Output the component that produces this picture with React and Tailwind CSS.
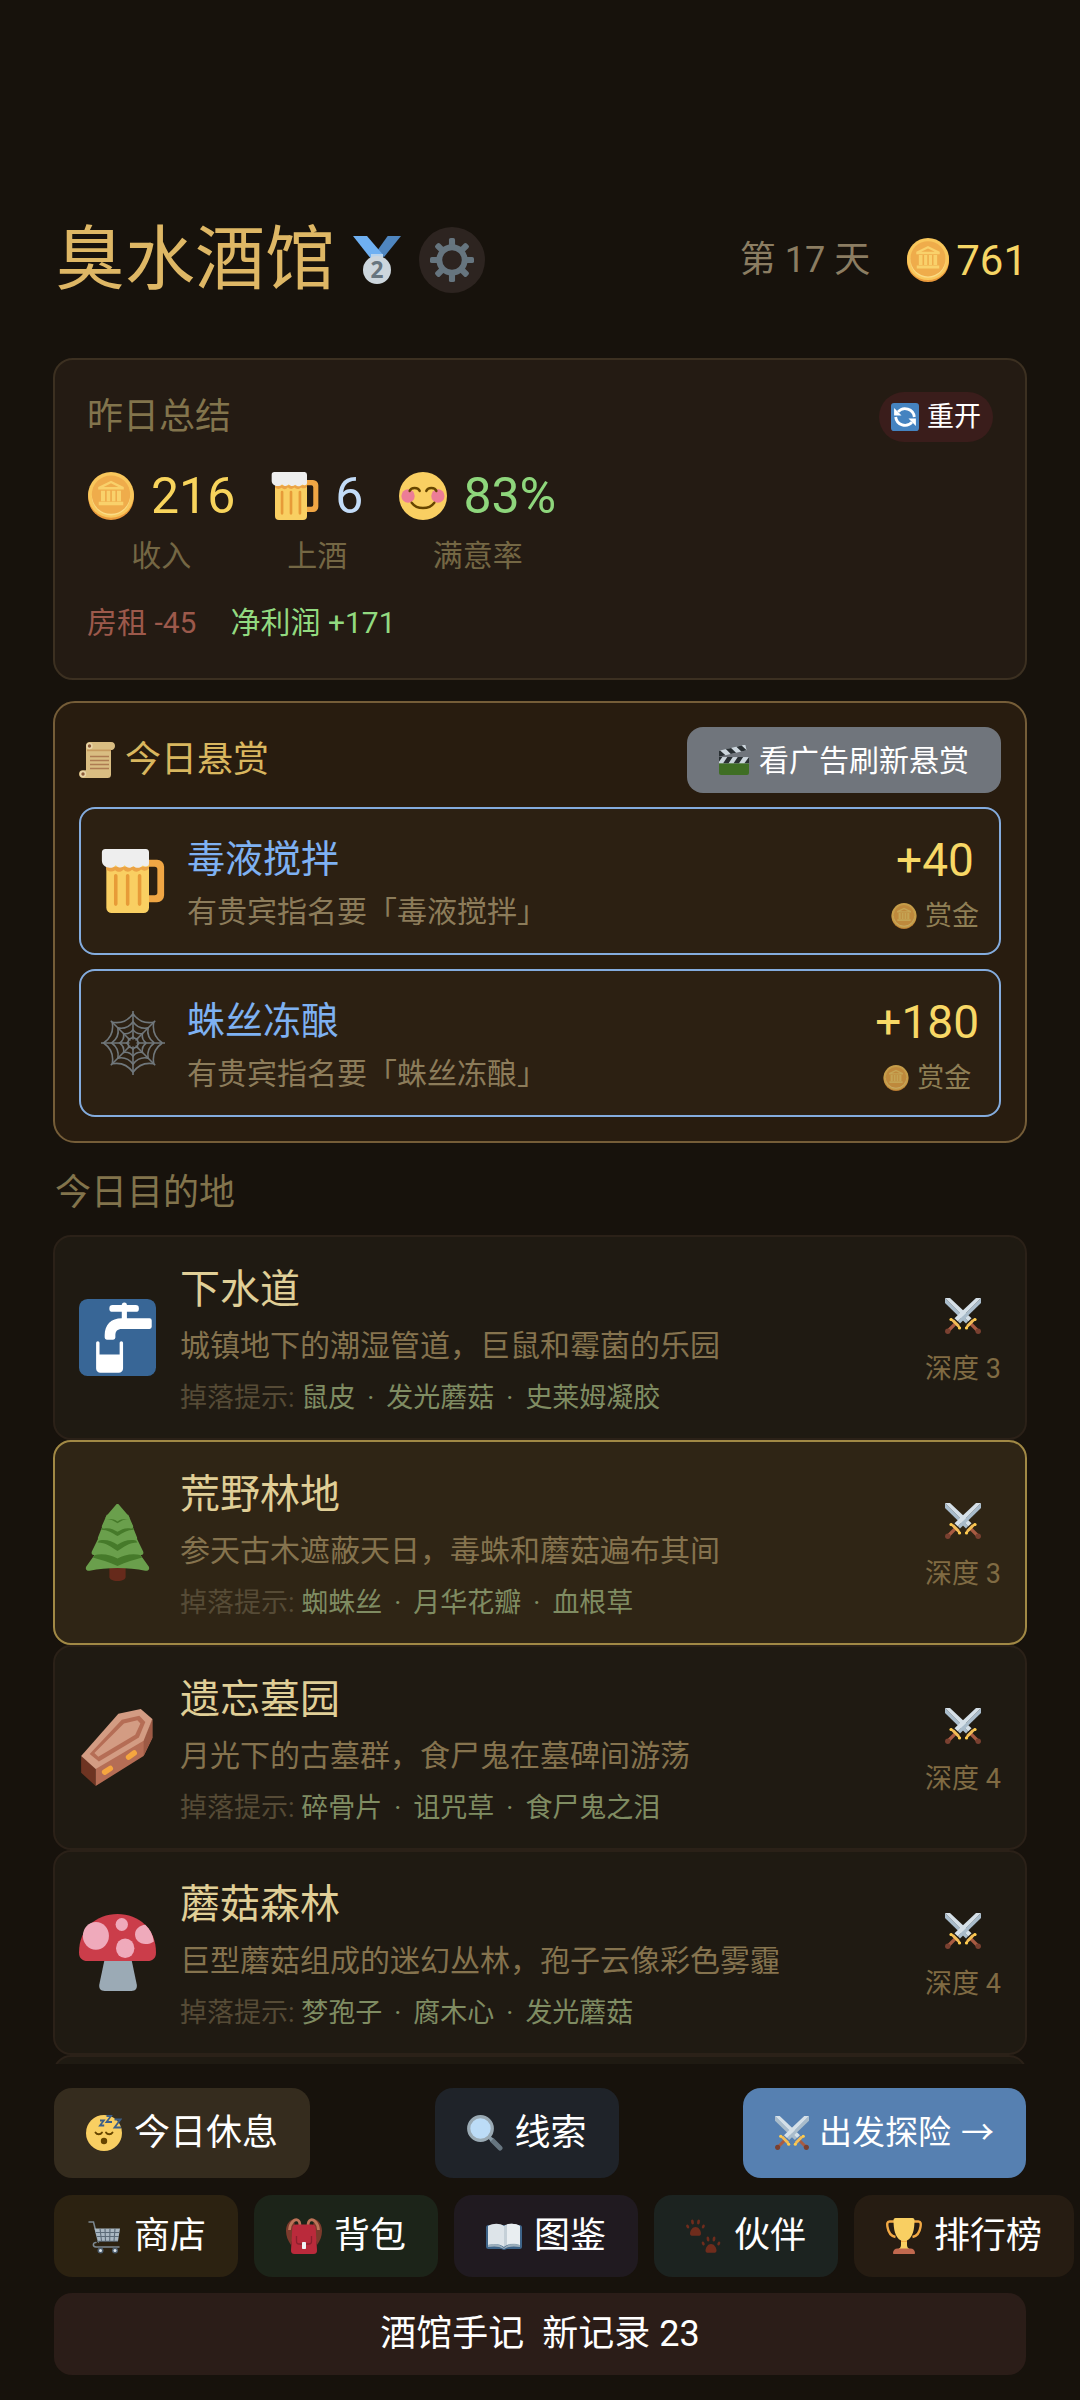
import { useState } from 'react';

const FONT = 'font-[Roboto,"Noto_Sans_CJK_SC",sans-serif]';

// 所有图标共用 36x36 画布
const Svg = ({ className, children }) => (
  <svg viewBox="0 0 36 36" className={`shrink-0 ${className}`} fill="none" aria-hidden="true">
    {children}
  </svg>
);

const Coin = ({ className }) => (
  <Svg className={className}>
    <circle cx="18" cy="18.8" r="17.2" fill="#ea9a3c" />
    <circle cx="18" cy="17.2" r="17.2" fill="#f9c75c" />
    <circle cx="18" cy="18.2" r="14.4" fill="#fbdc85" />
    <circle cx="18" cy="17" r="14.4" fill="#efac4b" />
    <path fill="#f9d16b" d="M18 6.6l9.6 4.6v2H8.4v-2zM10.5 14h3v8h-3zM14.8 14h2.6v8h-2.6zM18.7 14h2.6v8h-2.6zM22.5 14h3v8h-3zM8.8 22.4h18.4V25H8.8z" />
    <path fill="#efac4b" d="M18 8.5l5.5 2.8h-11z" />
  </Svg>
);

const Beer = ({ className }) => (
  <Svg className={className}>
    <path fill="#f0a644" fillRule="evenodd" d="M25 6h6.5a4 4 0 0 1 4 4v16a4 4 0 0 1-4 4H25zM27 10v16h3.2a1.5 1.5 0 0 0 1.5-1.5v-13A1.5 1.5 0 0 0 30.2 10z" />
    <path fill="#f9cf62" d="M3 7h24v26a3 3 0 0 1-3 3H6a3 3 0 0 1-3-3z" />
    <path fill="#eba345" d="M3 10h24v1c-1.5 1.5-3 1.6-4.5.6-1.6 1.5-3.5 1.5-5 .1-1.7 1.5-3.4 1.3-4.8-.2-1.5 1.8-3.3 1.7-4.7.4C6.300 13 4.5 13 3 11.5z" />
    <path stroke="#e79b38" strokeWidth="2" strokeLinecap="round" d="M8.3 15v16M15 15v16M21.7 15v16" />
    <path fill="#eeeeee" d="M2.5 0h22.7A2 2 0 0 1 27 2v6c0 1.7-1.8 2.5-3.5 1.3-1.7 1.7-3.8 1.7-5.3.2-1.7 1.5-3.5 1.3-4.9-.3-1.5 1.7-3.5 1.6-5-.1C6.5 11.5.8 11 .5 6.8V2a2 2 0 0 1 2-2z" />
  </Svg>
);

const Smile = ({ className }) => (
  <Svg className={className}>
    <circle cx="18" cy="18" r="18" fill="#f9cf62" />
    <circle cx="6.8" cy="18" r="5" fill="#ec7d97" />
    <circle cx="29.2" cy="18" r="5" fill="#ec7d97" />
    <path stroke="#664500" strokeWidth="1.9" strokeLinecap="round" d="M8 14.2c1-3 6.5-3 7.5 0M20.5 14.2c1-3 6.5-3 7.5 0" />
    <path stroke="#664500" strokeWidth="1.8" strokeLinecap="round" d="M9.5 23c4 5.4 13 5.4 17 0" />
  </Svg>
);

const Medal = ({ className }) => (
  <Svg className={className}>
    <path fill="#4f86c0" d="M26 0h10L23.5 15.5H15z" />
    <path fill="#6fb0f2" d="M0 0h10.5L22 13.5l-3 3h-6z" />
    <path fill="#b8d3ec" d="M13.5 13.5h9V17h-9z" />
    <circle cx="18" cy="25.5" r="10.5" fill="#cdd6dd" />
    <text x="18" y="31.5" textAnchor="middle" fontSize="17" fontWeight="700" fontFamily="Noto Sans" fill="#67757f">2</text>
  </Svg>
);

const Gear = ({ className }) => (
  <Svg className={className}>
    {[0, 45, 90, 135].map((deg) => (
      <g key={deg} transform={`rotate(${deg} 18 18)`} fill="#66757f">
        <rect x="15.5" y="0" width="5" height="9" rx="1.5" />
        <rect x="15.5" y="27" width="5" height="9" rx="1.5" />
      </g>
    ))}
    <circle cx="18" cy="18" r="10.4" stroke="#66757f" strokeWidth="4.8" />
  </Svg>
);

const Reload = ({ className }) => (
  <Svg className={className}>
    <rect width="36" height="36" rx="4" fill="#4583c0" />
    <path stroke="#fff" strokeWidth="3.6" d="M9 11.5A12 12 0 0 1 30 18M27 24.5A12 12 0 0 1 6 18" />
    <path fill="#fff" d="M4 6.5V16h9.5zM32 29.5V20h-9.5z" />
  </Svg>
);

const Scroll = ({ className }) => (
  <Svg className={className}>
    <path fill="#d9bd82" d="M10 0h22c3 0 4 2 4 4s-1.5 4-3.5 4H32v24.5a3.5 3.5 0 0 1-3.5 3.5H4c-2.5 0-4-2-4-4s1.5-3.7 3.5-3.7H7V4a4 4 0 0 1 3-4z" />
    <path fill="#c69a5f" d="M8 7.5h24v1.7H8z" />
    <circle cx="10.5" cy="4" r="3.2" fill="#e9d6a8" />
    <circle cx="10.5" cy="4" r="1.7" fill="#8a5a3a" />
    <circle cx="4" cy="32" r="3.2" fill="#e9d6a8" />
    <circle cx="4" cy="32" r="1.7" fill="#8a5a3a" />
    <path stroke="#ae7b52" strokeWidth="1.4" d="M11 14.5h19M11 18.5h19M11 22.5h19M11 26.5h19" />
  </Svg>
);

const Clapper = ({ className }) => (
  <Svg className={className}>
    <path fill="#3f6e24" d="M0 21h36v12.5a2.5 2.5 0 0 1-2.5 2.5h-31A2.5 2.5 0 0 1 0 33.5z" />
    <path fill="#ccd6dd" d="M0 14.5h36V22H0z" />
    <path fill="#292f33" d="M0 14.5h4L0 20zM10 14.5h6.5L11.5 22H5zM22.5 14.5H29L24 22h-6.5zM36 14.5V22h-5.5z" />
    <g transform="rotate(-13 0 14)">
      <path fill="#ccd6dd" d="M0 7h34v7H0z" />
      <path fill="#292f33" d="M0 7h3l5 7H0zM10 7h6.5l4.5 7h-6.5zM23 7h6.5l4.5 7h-6.5z" />
    </g>
  </Svg>
);

// 蛛网：八根辐条加四圈内凹的弧线
const webRing = (r) => {
  const pt = (i, rad) => {
    const a = (i * Math.PI) / 4;
    return `${(18 + rad * Math.cos(a)).toFixed(2)} ${(18 + rad * Math.sin(a)).toFixed(2)}`;
  };
  let d = `M${pt(0, r)}`;
  for (let i = 0; i < 8; i++) d += `Q${pt(i + 0.5, r * 0.68)} ${pt(i + 1, r)}`;
  return d;
};

const Web = ({ className }) => (
  <Svg className={className}>
    <g stroke="#70777b" strokeWidth="0.9">
      <path d="M18 0v36M0 18h36M5.5 5.5l25 25M30.5 5.5l-25 25" />
      {[3.5, 7.5, 12, 16.5].map((r) => (
        <path key={r} d={webRing(r)} />
      ))}
    </g>
    <circle cx="18" cy="18" r="2" fill="#2c2012" />
  </Svg>
);

const Tap = ({ className }) => (
  <Svg className={className}>
    <rect width="36" height="36" rx="4" fill="#386696" />
    <rect x="14.2" y="2.8" width="13.8" height="3.2" rx="1.5" fill="#fff" />
    <path fill="#fff" d="M20 2.8a1.2 1.2 0 0 1 2.4 0V10H20z" />
    <path fill="#fff" d="M33 9a1 1 0 0 1 1 1v3a1 1 0 0 1-1 1H20c-2 0-3 1-3 3v1a1 1 0 0 1-1 1h-3a1 1 0 0 1-1-1v-1c0-5 3-8 8-8z" />
    <path fill="#fff" d="M8 20.5a.8.8 0 0 1 1.6 0V26H19v-5.5a.8.8 0 0 1 1.6 0V32.5a2 2 0 0 1-2 2H10a2 2 0 0 1-2-2z" />
  </Svg>
);

const Tree = ({ className }) => (
  <Svg className={className}>
    <path fill="#662a1b" d="M14.2 29h7.6v5c0 1.2-1.4 2-3.8 2s-3.8-.8-3.8-2z" />
    <path fill="#6a9f4c" d="M10 20h16l6.6 9.2c.6 1.2-.2 2.3-1.6 2-8-1.7-18-1.7-26 0-1.4.3-2.2-.8-1.6-2z" />
    <path fill="#467a2a" d="M9 22h18l2.5 3C26 26 22 27 18 29c-4-2-8-3-11.5-4z" />
    <path fill="#6a9f4c" d="M10 14h16l4 8.2c.4 1-.2 1.8-1.2 1.6C24 23 21 24 18 25.5c-3-1.5-6-2.5-10.8-1.7-1 .2-1.6-.6-1.2-1.6z" />
    <path fill="#467a2a" d="M10.5 15.5h15l1.8 2.5c-3.8 0-6.3 2-9.3 4-3-2-5.5-4-9.3-4z" />
    <path fill="#6a9f4c" d="M11.5 9h13l2.6 6.6c.3.9-.2 1.5-1 1.4C23 16.5 20.5 17.5 18 19c-2.5-1.5-5-2.5-8.1-2-.8.1-1.3-.5-1-1.4z" />
    <path fill="#467a2a" d="M11.5 10h13l1.2 2c-3.2 0-5.2 1.5-7.7 3-2.5-1.5-4.5-3-7.7-3z" />
    <path fill="#6a9f4c" d="M13 5h10l2.2 5c.4.9-.1 1.5-.9 1.4-2.8-.4-4.3.3-6.3 1.6-2-1.3-3.5-2-6.3-1.6-.8.1-1.3-.5-.9-1.4z" />
    <path fill="#467a2a" d="M13.5 5.5h9l1 1.5c-2.2 0-3.5.7-5.5 2-2-1.3-3.3-2-5.5-2z" />
    <path fill="#6a9f4c" d="M17.2.5c.4-.7 1.2-.7 1.6 0l4.5 5.2c.6.9 0 1.5-.8 1.4-1.8-.2-3 .1-4.5 1.1-1.5-1-2.7-1.3-4.5-1.1-.8.1-1.4-.5-.8-1.4z" />
  </Svg>
);

const Coffin = ({ className }) => (
  <Svg className={className}>
    <path fill="#6e3422" d="M1 22l6.8 5.8V36L1 29.8z" />
    <path fill="#b56d55" d="M34.3 4.7v8.8L30.2 22 7.8 36v-9L31 12.5z" />
    <path fill="#9d5a45" d="M34.3 4.7v8.8L30.2 22v-8z" />
    <path fill="#d39c83" d="M18.4 2.2L28.9 0l5.4 4.7-4.1 10.2L7.8 28 1 22z" />
    <path fill="#b56d55" d="M20 5l8.2-1.9 2.8 3-3 7.2L9.3 24.5 5 21z" />
    <path fill="#d39c83" d="M21 6.8l6.3-1.5 1.4 1.5-2.4 5.2L9 22.3 7.2 20.6z" />
    <path stroke="#f5a63f" strokeWidth="2.6" strokeLinecap="round" d="M12 29.5l2.6-1.7M23.2 22.5l2.6-1.9" />
  </Svg>
);

const Mushroom = ({ className }) => (
  <Svg className={className}>
    <path fill="#9baab5" d="M12 21h12.5l2.5 12c.3 1.8-.6 3-2.5 3h-12.5c-1.9 0-2.8-1.2-2.5-3z" />
    <path fill="#cb3d4a" d="M0 18C0 7 8 0 18 0s18 7 18 18c0 2.6-1.5 4-4 4H4c-2.5 0-4-1.4-4-4z" />
    <ellipse cx="7.9" cy="10.2" rx="6.1" ry="6.5" fill="#efaabb" />
    <ellipse cx="20" cy="4.9" rx="2.9" ry="3" fill="#efaabb" />
    <ellipse cx="21.6" cy="16" rx="4.3" ry="4.6" fill="#efaabb" />
    <path fill="#efaabb" d="M31 5c-2.5.3-4.8 1.8-4.8 4.5s2 4.5 4.8 4.5c1.6 0 3-.4 4-1.2C34.5 9.5 33.2 7 31 5z" />
  </Svg>
);

const Blade = () => (
  <>
    <path fill="#a9bccb" d="M36 0v5L15 25.5 12.7 23z" />
    <path fill="#d5e0e8" d="M36 0h-5L9.5 20.3l3.2 2.9z" />
    <path stroke="#a85b42" strokeWidth="3.2" d="M10 26l-6 6" />
    <circle cx="2.8" cy="33.2" r="2.7" fill="#7a4030" />
    <path stroke="#f3bd57" strokeWidth="2.4" strokeLinecap="round" d="M6.5 21.5l8 8" />
    <path fill="#f3bd57" d="M8.5 21l6.5 6.5-3 .5-4-4z" />
    <circle cx="6" cy="21.5" r="1.6" fill="#ffcc4d" />
    <circle cx="14.5" cy="30" r="1.6" fill="#ffcc4d" />
  </>
);

const Swords = ({ className }) => (
  <Svg className={className}>
    <g transform="matrix(-1 0 0 1 36 0)">
      <Blade />
    </g>
    <Blade />
  </Svg>
);

const Sleepy = ({ className }) => (
  <Svg className={className}>
    <circle cx="18" cy="18" r="18" fill="#f9cf62" />
    <path stroke="#664500" strokeWidth="1.9" strokeLinecap="round" d="M9.5 17.5c1.5 2.4 5 2.4 6.5 0M20 17.5c1.5 2.4 5 2.4 6.5 0" />
    <circle cx="18" cy="26" r="3.2" fill="#664500" />
    <path stroke="#3d5f88" strokeWidth="1.8" d="M14 5.5h3.8L14 10.5h4.2M20.5 1h4.5l-4.5 6H26M28.5 4.5h6l-6 8h6.5" />
  </Svg>
);

const Magnifier = ({ className }) => (
  <Svg className={className}>
    <path stroke="#66757f" strokeWidth="5" strokeLinecap="round" d="M25.5 25.5l7.5 7.5" />
    <path stroke="#8899a6" strokeWidth="3.5" d="M21.5 21.5l3.5 3.5" />
    <circle cx="13.5" cy="13.5" r="11.8" fill="#bcdcf7" stroke="#9aaab4" strokeWidth="3.2" />
  </Svg>
);

const Cart = ({ className }) => (
  <Svg className={className}>
    <path stroke="#7c8890" strokeWidth="1.5" strokeLinecap="round" d="M3 4h4.5l5 20M10 24.5c-3 0-4 4 0 4.5h23" />
    <path fill="#aab8c2" d="M8.5 10.5H34L32 23H12z" />
    <path stroke="#5c6b78" strokeWidth="1.1" d="M9.5 14.5h24M10.5 18.5h22.5M14 10.5l1.5 12.5M19 10.5l.5 12.5M24 10.5l-.3 12.5M29 10.5L28 23M11 23.3h21" />
    <circle cx="14.5" cy="32.5" r="3" fill="#4d5d6c" />
    <circle cx="29" cy="32.5" r="3" fill="#4d5d6c" />
    <circle cx="14.5" cy="32.5" r="1.5" fill="#e1e8ed" />
    <circle cx="29" cy="32.5" r="1.5" fill="#e1e8ed" />
  </Svg>
);

const Backpack = ({ className }) => (
  <Svg className={className}>
    <path fill="#7b3a2c" d="M8 1C3 2 0 7 0 13c0 5 2 10 5 14l4-18zM28 1c5 1 8 6 8 12 0 5-2 10-5 14L27 9z" />
    <path stroke="#bd7458" strokeWidth="2.8" d="M3.5 12C4 4 9 1 11.5 2S14 6 14 8M32.5 12C32 4 27 1 24.5 2S22 6 22 8" />
    <path fill="#ba2a3b" d="M10 6.5h16c2.5 0 3.5 1.5 3.7 4L31 32c.1 2.5-1 4-3.5 4h-19C6 36 4.9 34.5 5 32l1.3-21.5c.2-2.5 1.2-4 3.7-4z" />
    <path stroke="#8b1f2d" strokeWidth="1.3" d="M10.5 18v5.5c0 1.5 1 2.5 2.5 2.5h10c1.5 0 2.5-1 2.5-2.5V18" />
    <rect x="16" y="24" width="4" height="7" rx="0.8" fill="#f0f3f5" />
  </Svg>
);

const Book = ({ className }) => (
  <Svg className={className}>
    <path fill="#3e6489" d="M2.5 7h31A2.5 2.5 0 0 1 36 9.5v19a2.5 2.5 0 0 1-2.5 2.5H21l-3 1-3-1H2.5A2.5 2.5 0 0 1 0 28.5v-19A2.5 2.5 0 0 1 2.5 7z" />
    <path fill="#9dafbc" d="M2 27c6-2 12-1 16 3 4-4 10-5 16-3v2c-6-1-11-1-16 2-5-3-10-3-16-2z" />
    <path fill="#dde4e9" d="M2 8c5-3 12-3 16 0v21c-4-3-10-4-16-2z" />
    <path fill="#c5d0d8" d="M34 8c-5-3-12-3-16 0v21c4-3 10-4 16-2z" />
    <path fill="#e9eef1" d="M34 8c-4-2.5-9-3-13-1.5v20c4-1.5 9-1.5 13 .5z" />
  </Svg>
);

const Paw = () => (
  <>
    <path fill="#6f2c1c" d="M9.5 9c3 0 5 3 5.5 6 .3 2-1 2.8-2.8 2.8H6.8C5 17.8 3.7 17 4 15c.5-3 2.5-6 5.5-6z" />
    <ellipse cx="1.7" cy="8.5" rx="1.3" ry="2" transform="rotate(-30 1.7 8.5)" fill="#6f2c1c" />
    <ellipse cx="6.5" cy="4" rx="1.4" ry="2.5" transform="rotate(-10 6.5 4)" fill="#6f2c1c" />
    <ellipse cx="12.5" cy="4" rx="1.4" ry="2.5" transform="rotate(10 12.5 4)" fill="#6f2c1c" />
    <ellipse cx="17.3" cy="8.5" rx="1.3" ry="2" transform="rotate(30 17.3 8.5)" fill="#6f2c1c" />
  </>
);

const Paws = ({ className }) => (
  <Svg className={className}>
    <Paw />
    <g transform="translate(15.5 17)">
      <Paw />
    </g>
  </Svg>
);

const Trophy = ({ className }) => (
  <Svg className={className}>
    <path stroke="#f2a944" strokeWidth="2.4" d="M10 3.5H3.5C1 3.5 1 6 1.5 9c.6 4 3 9 8 10M26 3.5h6.5c2.5 0 2.5 2.5 2 5.5-.6 4-3 9-8 10" />
    <path fill="#f9cf62" d="M7.5 2c0-1.2 1-2 2-2h17c1 0 2 .8 2 2 0 9-1.5 17.5-7.5 20.5V27c0 2 1 3 2.5 4h-11c1.5-1 2.5-2 2.5-4v-4.5C9 19.5 7.5 11 7.5 2z" />
    <path fill="#f2a944" d="M15 22.5c2 .9 4 .9 6 0V24h-6z" />
    <path fill="#c1694f" d="M7 35c0-2.5 2-4.5 4.5-4.5h13C27 30.5 29 32.5 29 35c0 .6-.5 1-1 1H8c-.5 0-1-.4-1-1z" />
  </Svg>
);

const stats = [
  { label: '收入', value: '216', Icon: Coin, color: 'text-[#f8d45c]' },
  { label: '上酒', value: '6', Icon: Beer, color: 'text-[#c3dcf8]' },
  { label: '满意率', value: '83%', Icon: Smile, color: 'text-[#8ed67c]' },
];

const bounties = [
  { name: '毒液搅拌', reward: '+40', Icon: Beer },
  { name: '蛛丝冻酿', reward: '+180', Icon: Web },
];

const places = [
  { name: '下水道', desc: '城镇地下的潮湿管道，巨鼠和霉菌的乐园', drops: ['鼠皮', '发光蘑菇', '史莱姆凝胶'], depth: 3, Icon: Tap },
  { name: '荒野林地', desc: '参天古木遮蔽天日，毒蛛和蘑菇遍布其间', drops: ['蜘蛛丝', '月华花瓣', '血根草'], depth: 3, Icon: Tree },
  { name: '遗忘墓园', desc: '月光下的古墓群，食尸鬼在墓碑间游荡', drops: ['碎骨片', '诅咒草', '食尸鬼之泪'], depth: 4, Icon: Coffin },
  { name: '蘑菇森林', desc: '巨型蘑菇组成的迷幻丛林，孢子云像彩色雾霾', drops: ['梦孢子', '腐木心', '发光蘑菇'], depth: 4, Icon: Mushroom },
];

const menu = [
  { label: '商店', Icon: Cart, bg: 'bg-[#2c2211]' },
  { label: '背包', Icon: Backpack, bg: 'bg-[#1c2419]' },
  { label: '图鉴', Icon: Book, bg: 'bg-[#201a20]' },
  { label: '伙伴', Icon: Paws, bg: 'bg-[#1c2320]' },
  { label: '排行榜', Icon: Trophy, bg: 'bg-[#261c12]' },
];

const Header = () => (
  <header className="flex h-[70px] items-center justify-between">
    <div className="flex items-center">
      <h1 className="px-0.5 text-[70px] leading-[72px] text-[#deb765]">臭水酒馆</h1>
      <Medal className="ml-4 size-12" />
      <button type="button" aria-label="设置" className="ml-[18px] flex size-[66px] items-center justify-center rounded-full bg-[#2d2420]">
        <Gear className="size-11" />
      </button>
    </div>
    <div className="flex items-center">
      <span className="text-[36px] text-[#8b7d62]">第 17 天</span>
      <Coin className="ml-9 size-11" />
      <span className="ml-1.5 text-[42px] text-[#f5d565]">761</span>
    </div>
  </header>
);

const Summary = () => (
  <section className="mt-[63px] rounded-[20px] border-2 border-[#3c3021] bg-[#241b13] p-8">
    <div className="flex h-[50px] items-center justify-between">
      <h2 className="text-[36px] leading-[52px] text-[#82744c]">昨日总结</h2>
      <button type="button" className="flex h-[50px] items-center gap-2 rounded-full bg-[#3a1d1b] px-3 text-[27px] text-white">
        <Reload className="size-7" />
        重开
      </button>
    </div>
    <div className="mt-6 flex gap-9">
      {stats.map(({ label, value, Icon, color }) => (
        <div key={label} className="flex flex-col items-center gap-2.5">
          <div className={`flex h-[60px] items-center gap-4 text-[50px] leading-[60px] ${color}`}>
            <Icon className="size-12" />
            {value}
          </div>
          <div className="text-[30px] leading-10 text-[#746744]">{label}</div>
        </div>
      ))}
    </div>
    <div className="mt-6 flex gap-[34px] text-[30px] leading-[46px]">
      <span className="text-[#9c594b]">房租 -45</span>
      <span className="text-[#92da80]">净利润 +171</span>
    </div>
  </section>
);

const Bounties = () => (
  <section className="mt-[21px] rounded-[22px] border-2 border-[#755d38] bg-[#281c0f] p-6">
    <div className="flex h-[66px] items-center justify-between">
      <h2 className="flex items-center gap-2.5 text-[36px] text-[#d9b75f]">
        <Scroll className="size-9" />
        今日悬赏
      </h2>
      <button type="button" className="flex h-[66px] items-center gap-2.5 rounded-2xl bg-[#70757c] px-8 text-[30px] text-white">
        <Clapper className="size-[30px]" />
        看广告刷新悬赏
      </button>
    </div>
    <ul className="mt-3.5 flex flex-col gap-3.5">
      {bounties.map(({ name, reward, Icon }) => (
        <li key={name} className="flex h-[148px] items-center rounded-2xl border-2 border-[#84acde] bg-[#2c2012] px-5">
          <Icon className="size-16" />
          <div className="ml-[22px] flex-1 pt-2">
            <h3 className="text-[38px] leading-[54px] text-[#7eb1f2]">{name}</h3>
            <p className="text-[30px] leading-[52px] text-[#8c7c5a]">有贵宾指名要「{name}」</p>
          </div>
          <div className="flex flex-col items-center pt-3.5">
            <div className="text-[46px] leading-[56px] text-[#f8d866]">{reward}</div>
            <div className="flex items-center gap-2 text-[27px] leading-[56px] text-[#8f7f55]">
              <Coin className="size-[26px] opacity-75" />
              赏金
            </div>
          </div>
        </li>
      ))}
    </ul>
  </section>
);

const Drops = ({ items }) => (
  <span className="text-[27px] leading-[52px] text-[#7f8c62]">
    <span className="text-[#564b36]">掉落提示: </span>
    {items.map((item, i) => (
      <span key={item}>
        {i > 0 && <span className="mx-3">·</span>}
        {item}
      </span>
    ))}
  </span>
);

const App = () => {
  const [selected, setSelected] = useState('荒野林地');

  return (
    <main className={`${FONT} flex h-screen flex-col overflow-hidden bg-[#17120c] px-[53px] pt-[225px] pb-[25px]`}>
      <Header />
      <Summary />
      <Bounties />

      <h2 className="mt-[30px] mb-[22px] px-0.5 text-[36px] leading-10 text-[#82744c]">今日目的地</h2>
      <div className="min-h-0 flex-1 overflow-y-auto [scrollbar-width:none]">
        {places.map(({ name, desc, drops, depth, Icon }) => (
          <button
            key={name}
            type="button"
            aria-pressed={selected === name}
            onClick={() => setSelected(name)}
            className={`flex h-[205px] w-full items-center rounded-[18px] border-2 px-6 text-left ${
              selected === name ? 'border-[#a18945] bg-[#2f2515]' : 'border-[#2b2118] bg-[#1f1a12]'
            }`}
          >
            <Icon className="size-[77px]" />
            <span className="ml-6 flex flex-1 flex-col pt-2">
              <span className="text-[40px] leading-[60px] text-[#e0cf97]">{name}</span>
              <span className="text-[30px] leading-[52px] text-[#85734e]">{desc}</span>
              <Drops items={drops} />
            </span>
            <span className="flex flex-col items-center pt-4">
              <Swords className="size-9" />
              <span className="mt-2.5 text-[27px] leading-[50px] text-[#806b43]">深度 {depth}</span>
            </span>
          </button>
        ))}
        {/* 下一张卡片只露出上沿 */}
        <div className="h-[205px] rounded-[18px] border-2 border-[#2b2118] bg-[#1f1a12]" />
      </div>

      <footer className="mt-6 px-px text-[36px] text-white">
        <div className="flex h-[90px] items-stretch justify-between">
          <button type="button" className="flex items-center gap-3 rounded-[18px] bg-[#352c1e] px-8">
            <Sleepy className="size-9" />
            今日休息
          </button>
          <button type="button" className="flex items-center gap-3 rounded-[18px] bg-[#1f2329] px-8">
            <Magnifier className="size-9" />
            线索
          </button>
          <button type="button" className="flex items-center gap-2.5 rounded-[18px] bg-[#5680b1] px-8 text-[33px]">
            <Swords className="size-[34px]" />
            出发探险
            <span>→</span>
          </button>
        </div>
        <nav className="mt-[17px] flex h-[82px] gap-4">
          {menu.map(({ label, Icon, bg }) => (
            <button key={label} type="button" className={`flex shrink-0 items-center gap-3 rounded-[18px] px-8 ${bg}`}>
              <Icon className="size-9" />
              {label}
            </button>
          ))}
        </nav>
        <button type="button" className="mt-4 h-[82px] w-full rounded-[18px] bg-[#2b1d18] whitespace-pre">
          酒馆手记  新记录 23
        </button>
      </footer>
    </main>
  );
};

export default App;
